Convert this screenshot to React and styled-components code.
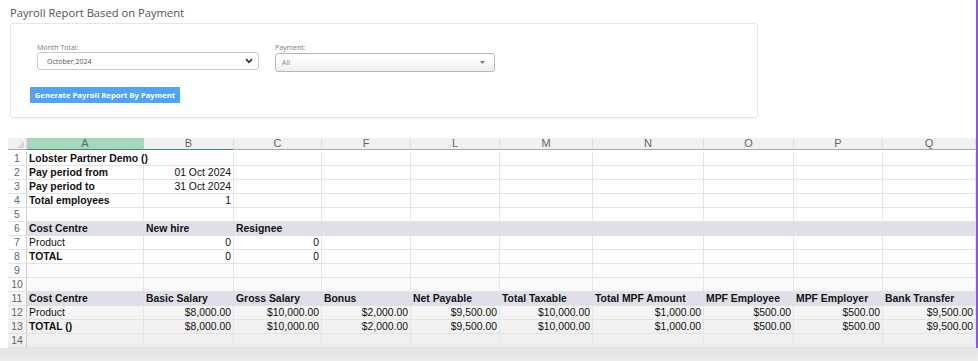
import React from "react";
import styled, { createGlobalStyle } from "styled-components";

const GlobalStyle = createGlobalStyle`
  html, body { margin: 0; padding: 0; background: #fff; }
  body { font-family: "Liberation Sans", Arial, sans-serif; }
`;

// page frame
const Page = styled.div`
  width: 978px;
  height: 361px;
  display: flex;
  flex-direction: column;
  overflow: hidden;
`;

const Top = styled.div`
  display: flex;
  height: 348px;
`;

const Main = styled.div`
  flex: 1;
  display: flex;
  flex-direction: column;
`;

const Strip = styled.div`
  width: 2px;
  background: #8b55f2;
`;

const Footer = styled.div`
  flex: 1;
  background: linear-gradient(#e4e4e4, #ececec);
`;

// report form
const Title = styled.h2`
  margin: 5px 0 0 10px;
  font-family: "Open Sans", sans-serif;
  font-weight: 400;
  font-size: 11.2px;
  line-height: 15px;
  color: #555;
`;

const Card = styled.div`
  margin: 3px 0 0 10px;
  width: 748px;
  height: 97px;
  box-sizing: border-box;
  border: 1px solid #e6e6e6;
  border-radius: 3px;
  box-shadow: 0 1px 2px rgba(0, 0, 0, 0.04);
  padding: 19px 0 0 19px;
  display: flex;
  flex-direction: column;
  font-family: "Open Sans", sans-serif;
`;

const Fields = styled.div`
  display: flex;
  gap: 16px;
  padding-left: 7px;
  align-items: flex-start;
`;

const Field = styled.div`
  display: flex;
  flex-direction: column;
  width: ${(p) => p.width}px;
`;

const Label = styled.label`
  font-size: 7px;
  line-height: 9px;
  color: #777;
  margin-bottom: ${(p) => (p.gap ? 1 : 0)}px;
`;

const Select = styled.div`
  height: ${(p) => (p.plain ? 18 : 19)}px;
  box-sizing: border-box;
  border: 1px solid ${(p) => (p.plain ? "#ccc" : "#b8b8b8")};
  border-radius: 3px;
  background: ${(p) =>
    p.plain ? "#fff" : "linear-gradient(#ffffff 20%, #eeeeee)"};
  display: flex;
  align-items: center;
  justify-content: space-between;
  padding: 0 ${(p) => (p.plain ? 5 : 9)}px 0 ${(p) => (p.plain ? 9 : 6)}px;
  font-size: 7px;
  color: ${(p) => (p.plain ? "#555" : "#888")};
`;

const Button = styled.button`
  margin-top: 15px;
  width: 150px;
  height: 16px;
  border: none;
  border-radius: 1px;
  background: #4fa3fb;
  color: #fff;
  font-family: "Open Sans", sans-serif;
  font-weight: 700;
  font-size: 7.7px;
  padding: 0;
  cursor: pointer;
`;

// spreadsheet
const COLS = [19, 117, 90, 88, 89, 89, 93, 111, 90, 89, 93];

const Sheet = styled.div`
  margin: 20px 0 0 8px;
  width: 968px;
  display: grid;
  grid-template-columns: ${COLS.map((c) => c + "px").join(" ")};
  grid-auto-rows: 14px;
  background: linear-gradient(#ffffff 55%, #eeeeee);
  font-size: 10.4px;
  line-height: 13px;
  color: #111;
`;

const Head = styled.div`
  height: 12px;
  box-sizing: border-box;
  background: ${(p) => (p.active ? "#a5d8bb" : "#f1f1f1")};
  border-right: 1px solid ${(p) => (p.active ? "#a5d8bb" : "#dcdcdc")};
  border-bottom: 1px solid ${(p) => (p.green ? "#3f8f5f" : "#a9a9a9")};
  color: #666;
  font-size: 11px;
  line-height: 11px;
  text-align: center;
  position: relative;
`;

const Corner = styled(Head)`
  &::after {
    content: "";
    position: absolute;
    right: 2px;
    bottom: 1px;
    border-left: 7px solid transparent;
    border-bottom: 7px solid #d6d6d6;
  }
`;

const RowNum = styled.div`
  box-sizing: border-box;
  border-right: 1px solid #cfcfcf;
  border-bottom: 1px solid #e4e4e4;
  color: #666;
  text-align: center;
`;

const Cell = styled.div`
  grid-column: span ${(p) => p.span || 1};
  box-sizing: border-box;
  padding: 0 2px;
  white-space: nowrap;
  overflow: hidden;
  text-align: ${(p) => (p.right ? "right" : "left")};
  font-weight: ${(p) => (p.bold ? 700 : 400)};
  background: ${(p) => (p.shade ? "#dfdfe9" : "transparent")};
  border-right: 1px solid ${(p) => (p.shade ? "#dfdfe9" : "#e6e6e6")};
  border-bottom: 1px solid ${(p) => (p.shade ? "#dfdfe9" : "#e4e4e4")};
`;

const LETTERS = ["A", "B", "C", "F", "L", "M", "N", "O", "P", "Q"];

const b = (v) => ({ v, bold: true });
const r = (v) => ({ v, right: true });
const money = ["$8,000.00", "$10,000.00", "$2,000.00", "$9,500.00", "$10,000.00", "$1,000.00", "$500.00", "$500.00", "$9,500.00"];

const ROWS = [
  { cells: [{ v: "Lobster Partner Demo ()", bold: true, span: 2 }] },
  { cells: [b("Pay period from"), r("01 Oct 2024")] },
  { cells: [b("Pay period to"), r("31 Oct 2024")] },
  { cells: [b("Total employees"), r("1")] },
  { cells: [] },
  { shade: true, cells: [b("Cost Centre"), b("New hire"), b("Resignee")] },
  { cells: [{ v: "Product" }, r("0"), r("0")] },
  { cells: [b("TOTAL"), r("0"), r("0")] },
  { cells: [] },
  { cells: [] },
  {
    shade: true,
    cells: [
      "Cost Centre", "Basic Salary", "Gross Salary", "Bonus", "Net Payable",
      "Total Taxable", "Total MPF Amount", "MPF Employee", "MPF Employer", "Bank Transfer",
    ].map(b),
  },
  { cells: [{ v: "Product" }, ...money.map(r)] },
  { cells: [b("TOTAL ()"), ...money.map(r)] },
  { cells: [] },
];

function fillRow(cells) {
  const out = [...cells];
  let used = cells.reduce((n, c) => n + (c.span || 1), 0);
  while (used < LETTERS.length) {
    out.push({ v: "" });
    used++;
  }
  return out;
}

const Chevron = () => (
  <svg width="8" height="6" viewBox="0 0 8 6">
    <polyline points="1,1.2 4,4.3 7,1.2" fill="none" stroke="#333" strokeWidth="1.8" />
  </svg>
);

const Caret = () => (
  <svg width="5" height="3" viewBox="0 0 5 3">
    <polygon points="0,0 5,0 2.5,3" fill="#777" />
  </svg>
);

const App = () => (
  <>
    <GlobalStyle />
    <Page>
      <Top>
        <Main>
          <Title>Payroll Report Based on Payment</Title>
          <Card>
            <Fields>
              <Field width={222}>
                <Label>Month Total:</Label>
                <Select plain>
                  <span>October,2024</span>
                  <Chevron />
                </Select>
              </Field>
              <Field width={220}>
                <Label gap>Payment:</Label>
                <Select>
                  <span>All</span>
                  <Caret />
                </Select>
              </Field>
            </Fields>
            <Button>Generate Payroll Report By Payment</Button>
          </Card>

          <Sheet>
            <Corner />
            {LETTERS.map((l, i) => (
              <Head key={l} active={i === 0} green={i < 2}>
                {l}
              </Head>
            ))}
            {ROWS.map((row, ri) => (
              <React.Fragment key={ri}>
                <RowNum>{ri + 1}</RowNum>
                {fillRow(row.cells).map((c, ci) => (
                  <Cell
                    key={ci}
                    span={c.span}
                    bold={c.bold}
                    right={c.right}
                    shade={row.shade}
                  >
                    {c.v}
                  </Cell>
                ))}
              </React.Fragment>
            ))}
          </Sheet>
        </Main>
        <Strip />
      </Top>
      <Footer />
    </Page>
  </>
);

export default App;
